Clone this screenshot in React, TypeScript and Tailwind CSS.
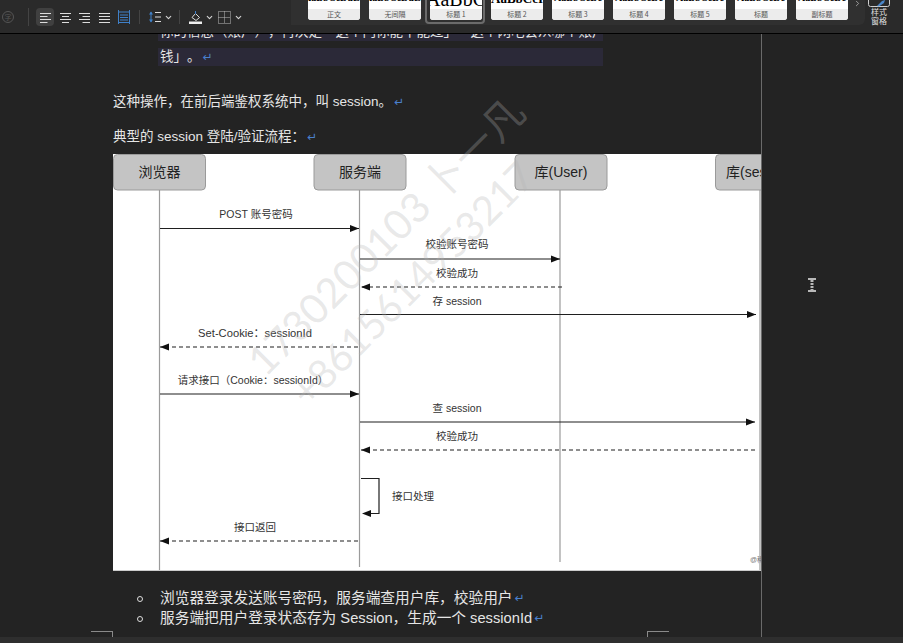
import { ChevronDown, ChevronRight } from "lucide-react";

const sans = "font-['Liberation_Sans','Noto_Sans_CJK_SC',sans-serif] [text-spacing-trim:space-all]";

const cards = [
  { label: "正文", sample: "AaBbCcDdEe" },
  { label: "无间隔", sample: "AaBbCcDdEe" },
  { label: "标题 1", sample: "AaBbC", big: true },
  { label: "标题 2", sample: "AaBbCcI", mid: true },
  { label: "标题 3", sample: "AaBbCcDc" },
  { label: "标题 4", sample: "AaBbCcDc" },
  { label: "标题 5", sample: "AaBbCcDc" },
  { label: "标题", sample: "AaBbCcDc" },
  { label: "副标题", sample: "AaBbCcDc" },
];

const Sep = ({ className }: { className: string }) => <div className={`w-px bg-[#444444] ${className}`} />;

const Return = () => <span className="text-[#4a80cc] text-[12px] ml-[2px] font-['DejaVu_Sans']">↵</span>;

const Chevron = ({ className }: { className: string }) => (
  <ChevronDown size={9} strokeWidth={3} color="#d4d4d4" className={className} />
);

// 4 line alignment glyphs, long and short rows
const AlignIcon = ({ d, className = "" }: { d: string; className?: string }) => (
  <svg width="11" height="11" viewBox="0 0 11 11" fill="none" stroke="#dcdcdc" className={className}>
    <path d={d} />
  </svg>
);

function Toolbar() {
  return (
    <div className="h-[34px] shrink-0 flex bg-[#2a2a2a] border-b border-black overflow-hidden">
      <div className="w-[291px] shrink-0 flex items-center h-[33px] pt-px">
        <div className="w-[12px] h-[12px] ml-[2px] rounded-full border border-[#555555] text-[#555555] text-[7px] leading-[10px] text-center font-['Noto_Sans_CJK_SC']">
          字
        </div>
        <Sep className="h-[18px] ml-[14px] bg-[#3a3a3a]" />
        <div className="ml-[7px] w-[18px] h-[18px] bg-[#404040] rounded-sm flex items-center justify-center">
          <AlignIcon d="M0 1.5h11M0 4.5h7.5M0 7.5h11M0 10.5h7.5" />
        </div>
        <AlignIcon d="M0 1.5h11M2 4.5h7M0 7.5h11M2 10.5h7" className="ml-[6px]" />
        <AlignIcon d="M0 1.5h11M3.5 4.5h7.5M0 7.5h11M3.5 10.5h7.5" className="ml-[8px]" />
        <AlignIcon d="M0 1.5h11M0 4.5h11M0 7.5h11M0 10.5h11" className="ml-[9px]" />
        <svg width="12" height="14" viewBox="0 0 12 14" className="ml-[8px]" fill="none" stroke="#3f80c8">
          <path d="M0.5 0v14M11.5 0v14M0.5 2h11M2 5h8M2 7.5h8M2 10h8M0.5 12.5h11" />
        </svg>
        <Sep className="h-[14px] ml-[9px]" />
        <svg width="12" height="12" viewBox="0 0 12 12" className="ml-[9px]" fill="none">
          <path d="M6 1.5h6M6 6h6M6 10.5h6" stroke="#dcdcdc" />
          <path d="M2 1v10" stroke="#3f80c8" />
          <path d="M0 3.5l2-3 2 3zM0 8.5l2 3 2-3z" fill="#3f80c8" />
        </svg>
        <Chevron className="ml-[3px]" />
        <Sep className="h-[14px] ml-[6px]" />
        <svg width="13" height="13" viewBox="0 0 13 13" className="ml-[9px]" fill="none">
          <path d="M3 6.5l3.5-4 4 4-3.5 3z" stroke="#dcdcdc" />
          <path d="M6.5 0v3" stroke="#3f80c8" />
          <path d="M0 10.5h13v2.5h-13z" fill="#efefef" />
        </svg>
        <Chevron className="ml-[3px]" />
        <svg width="13" height="13" viewBox="0 0 13 13" className="ml-[4px]" fill="none" stroke="#bdbdbd" strokeDasharray="1 1">
          <path d="M0.5 0.5h12v12h-12zM6.5 0.5v12M0.5 6.5h12" />
        </svg>
        <Chevron className="ml-[3px]" />
      </div>
      <div className="w-[574px] shrink-0 h-[25px] bg-[#303030] rounded-br-md flex gap-[9px] pl-[17px] relative">
        {cards.map((c) => (
          <div key={c.label} className="relative w-[52px] h-5 shrink-0">
            {c.big && <div className="absolute -left-[5px] -right-[3px] -top-2 h-[32px] border-2 border-[#6b6b6b] rounded-sm" />}
            <div className="relative w-full h-full rounded-b-[3px] overflow-hidden bg-white flex flex-col">
              <div className="h-[9px] relative overflow-hidden">
                <div
                  className={`absolute left-1/2 -translate-x-1/2 whitespace-nowrap text-black font-bold font-['Liberation_Serif',serif] ${
                    c.big
                      ? "text-[20px] leading-[20px] -top-[11px] font-normal"
                      : c.mid
                        ? "text-[13px] leading-[14px] -top-[8px]"
                        : "text-[10px] leading-[10px] -top-[7px]"
                  }`}
                >
                  {c.sample}
                </div>
              </div>
              <div className="flex-1 bg-[#ececec] text-center text-[#555555] text-[7px] leading-[11px] font-['Noto_Sans_CJK_SC',sans-serif]">
                {c.label}
              </div>
            </div>
          </div>
        ))}
        <ChevronRight size={9} strokeWidth={2} color="#bbbbbb" className="absolute right-[3px] top-[-1px]" />
      </div>
      <div className="flex-1 flex flex-col items-center pr-[10px] text-[#e0e0e0] text-[8px] leading-[9px] font-['Noto_Sans_CJK_SC',sans-serif]">
        <svg width="22" height="7" viewBox="0 0 22 7" fill="none">
          <path d="M0.5 0v4.5a2 2 0 0 0 2 2h17a2 2 0 0 0 2-2V0" stroke="#cfcfcf" />
          <path d="M9 6l5-5 3-1-1 3-5 3.5z" fill="#4a86c8" />
        </svg>
        <span>样式</span>
        <span>窗格</span>
      </div>
    </div>
  );
}

const Msg = ({ x1, x2, y, dashed }: { x1: number; x2: number; y: number; dashed?: boolean }) => {
  const dir = x2 > x1 ? -1 : 1;
  return (
    <g>
      <path d={`M${x1} ${y}H${x2}`} stroke="#1f1f1f" strokeWidth="1.2" strokeDasharray={dashed ? "4 3" : undefined} />
      <path d={`M${x2} ${y}l${dir * 9} -3.5v7z`} fill="#111111" />
    </g>
  );
};

const Label = ({ x, y, size = 10.5, children }: { x: number; y: number; size?: number; children: string }) => (
  <text x={x} y={y} textAnchor="middle" dominantBaseline="central" fontSize={size} fill="#333333">
    {children}
  </text>
);

const Head = ({ x, w = 92, children }: { x: number; w?: number; children: string }) => (
  <g>
    <rect x={x} y="154.5" width={w} height="35.5" rx="4" fill="#c4c4c4" stroke="#9a9a9a" />
    <text x={x + 46} y="172" textAnchor="middle" dominantBaseline="central" fontSize="14" fill="#222222">
      {children}
    </text>
  </g>
);

function Diagram() {
  return (
    <svg viewBox="113 154 648 417" className="block w-[648px] h-[417px] bg-white">
      <path d="M159.5 190V570M359.5 190V567M560 190V562M760 190V571" stroke="#9b9b9b" strokeWidth="1.2" fill="none" />
      <Head x={113.5}>浏览器</Head>
      <Head x={314}>服务端</Head>
      <Head x={515}>库(User)</Head>
      <Head x={715.5} w={100}>库(session)</Head>

      <Label x={256} y={214}>POST 账号密码</Label>
      <Msg x1={160} x2={359} y={228.5} />
      <Label x={457} y={244}>校验账号密码</Label>
      <Msg x1={360} x2={560} y={259} />
      <Label x={457} y={273}>校验成功</Label>
      <Msg x1={562} x2={361} y={287} dashed />
      <Label x={457} y={301}>存 session</Label>
      <Msg x1={360} x2={756} y={314.5} />
      <Label x={255} y={333} size={11.2}>Set-Cookie：sessionId</Label>
      <Msg x1={358} x2={160} y={347} dashed />
      <Label x={253} y={380}>请求接口（Cookie：sessionId）</Label>
      <Msg x1={160} x2={359} y={394} />
      <Label x={457} y={408}>查 session</Label>
      <Msg x1={360} x2={755} y={422} />
      <Label x={457} y={436}>校验成功</Label>
      <Msg x1={755} x2={361} y={450} dashed />
      <path d="M361 478.5H379V513.5H370" stroke="#1f1f1f" strokeWidth="1.2" fill="none" />
      <path d="M362 513.5l9 -3.5v7z" fill="#111111" />
      <Label x={413} y={496}>接口处理</Label>
      <Label x={255} y={527}>接口返回</Label>
      <Msg x1={358} x2={160} y={541} dashed />
      <text x={750} y={562} fontSize="7" fill="#777777">@稀土</text>
      <path d="M113 570.5H761" stroke="#cccccc" />
    </svg>
  );
}

function Watermark() {
  return (
    <div className="absolute left-0 top-0 w-[903px] h-[643px] pointer-events-none overflow-hidden font-['Lato','Noto_Sans_CJK_SC',sans-serif] text-[rgba(180,180,180,0.3)]">
      <div className="absolute left-[186px] top-[214px] w-[400px] text-[41px] leading-[44px] text-center whitespace-nowrap -rotate-45">
        1730200103 卜一凡
      </div>
      <div className="absolute left-[212px] top-[261px] w-[400px] text-[40px] leading-[44px] text-center whitespace-nowrap -rotate-45">
        +8615614953217
      </div>
    </div>
  );
}

export default function App() {
  return (
    <div className={`relative w-[903px] h-[643px] overflow-hidden bg-[#232323] flex flex-col text-[#e6e6e6] ${sans}`}>
      <Toolbar />
      <div className="flex-1 flex min-h-0">
        <div className="w-[762px] shrink-0 border-r border-[#6a6a6a] overflow-hidden">
          <div className="ml-[158px] w-[445px] h-[18px] -mt-[11px] bg-[#2b2938] text-[13.5px] leading-[18px] whitespace-nowrap overflow-hidden pl-[2px]">
            你的信息（账户），再决定「这个门你能不能过」「这个网吧会从哪个账户扣
          </div>
          <div className="ml-[158px] w-[445px] h-[18px] mt-[7px] bg-[#2b2938] text-[13.5px] leading-[18px] pl-[2px]">
            钱」。
            <Return />
          </div>
          <p className="ml-[113px] mt-[27px] h-[18px] text-[13.5px] leading-[18px]">
            这种操作，在前后端鉴权系统中，叫 session。
            <Return />
          </p>
          <p className="ml-[113px] mt-[17px] h-[18px] text-[13.5px] leading-[18px]">
            典型的 session 登陆/验证流程：
            <Return />
          </p>
          <div className="ml-[113px] mt-2">
            <Diagram />
          </div>
          <ul className="mt-[17px] ml-[137px] text-[14.7px] leading-5 whitespace-nowrap">
            <li className="flex items-center">
              <span className="w-[6px] h-[6px] mt-[2px] rounded-full border border-[#dddddd] mr-[17px]" />
              浏览器登录发送账号密码，服务端查用户库，校验用户
              <Return />
            </li>
            <li className="flex items-center">
              <span className="w-[6px] h-[6px] mt-[2px] rounded-full border border-[#dddddd] mr-[17px]" />
              服务端把用户登录状态存为 Session，生成一个 sessionId
              <Return />
            </li>
          </ul>
          <div className="flex mt-[3px] ml-[91px]">
            <div className="w-[22px] h-[6px] border-t border-r border-[#8a8a8a]" />
            <div className="w-[22px] h-[6px] border-t border-l border-[#8a8a8a] ml-[534px]" />
          </div>
        </div>
        <div className="flex-1 pl-[46px] pt-[244px]">
          <svg width="8" height="14" viewBox="0 0 8 14" fill="none" stroke="#b8b8b8">
            <path d="M0 1h8M0 13h8" strokeWidth="2" />
            <path d="M4 2v10" strokeWidth="3" strokeDasharray="2 1" />
          </svg>
        </div>
      </div>
      <div className="h-[6px] shrink-0 bg-[#2e2e2e]" />
      <Watermark />
    </div>
  );
}
